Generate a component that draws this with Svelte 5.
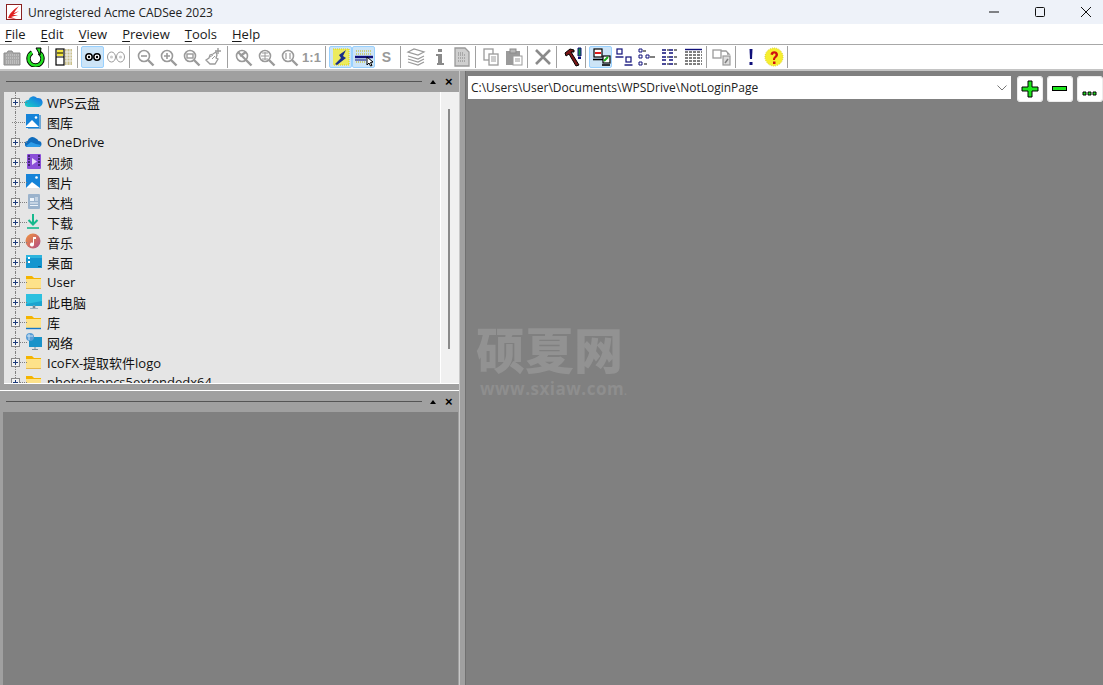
<script>
  const menus = [
    { k: 'F', r: 'ile' }, { k: 'E', r: 'dit' }, { k: 'V', r: 'iew' },
    { k: 'P', r: 'review' }, { k: 'T', r: 'ools' }, { k: 'H', r: 'elp' }
  ];

  const g = '#9a9a9a';
  const lens = (extra = '', c = g) => `<circle cx="9" cy="9" r="5.5" fill="#fff" stroke="${c}" stroke-width="1.6"/><path d="M13 13l5.5 5.5" stroke="${c}" stroke-width="2.4"/>${extra}`;
  const icons = {
    camera: `<path d="M2 6h3l1-2h4l1 2h7v12H2z" fill="#a8a8a8" stroke="#8c8c8c"/><path d="M4 8h13M4 11h13M4 14h13M4 16h13" stroke="#d4d4d4" stroke-dasharray="1 1"/>`,
    refresh: `<path d="M7 5.5a7 7 0 1 0 7 0" fill="none" stroke="#000" stroke-width="4.4"/><path d="M7 5.5a7 7 0 1 0 7 0" fill="none" stroke="#22e022" stroke-width="2.6"/><path d="M11 1l5 0-1 7z" fill="#22e022" stroke="#000"/>`,
    split: `<rect x="2" y="2" width="8" height="16" fill="#fff" stroke="#000" stroke-width="1.2"/><rect x="3" y="3" width="6" height="6" fill="#f4e640"/><path d="M3 6h6M2 10h8" stroke="#000"/><rect x="11" y="2" width="7" height="16" fill="#c9c08a"/><path d="M11 5h7M11 8h7M11 11h7M11 14h7M13 2v16M16 2v16" stroke="#eee"/>`,
    eyes: `<circle cx="6" cy="10" r="3.2" fill="#fff" stroke="#000" stroke-width="1.5"/><circle cx="14" cy="10" r="3.2" fill="#fff" stroke="#000" stroke-width="1.5"/><circle cx="6" cy="10" r="1.2"/><circle cx="14" cy="10" r="1.2"/>`,
    eyesOff: `<ellipse cx="5.5" cy="10" rx="4" ry="5" fill="#fff" stroke="${g}"/><ellipse cx="14.5" cy="10" rx="4" ry="5" fill="#fff" stroke="${g}"/><circle cx="5.5" cy="10" r="1.6" fill="#ccc"/><circle cx="14.5" cy="10" r="1.6" fill="#ccc"/>`,
    zoomOut: lens(`<path d="M6 9h6" stroke="${g}" stroke-width="1.6"/>`),
    zoomIn: lens(`<path d="M6 9h6M9 6v6" stroke="${g}" stroke-width="1.6"/>`),
    zoomFit: lens(`<rect x="6" y="7" width="6" height="4" fill="none" stroke="${g}" stroke-width="1.4"/>`),
    zoomHand: `<path d="M2 13l3-2 1-3 3-1 3-2 1 3-1 3 2 1-3 5H6z" fill="#fff" stroke="${g}" stroke-width="1.3"/><path d="M6 10l3-2M8 12l3-3" stroke="${g}"/><path d="M14 1v6M11 4h6" stroke="${g}" stroke-width="1.4"/>`,
    zoomAll: lens(`<path d="M5 5l8 8M13 5l-6 4" stroke="${g}" stroke-width="2.2"/>`),
    zoomGrid: lens(`<path d="M5 9h8M9 5v8M6 6h6M6 12h6" stroke="${g}"/>`),
    zoomReal: lens(`<path d="M7 6v6M11 6v6" stroke="${g}" stroke-width="1.2"/>`),
    lightning: `<rect x="2" y="2" width="16" height="16" fill="#f7ee2c" opacity=".75"/><path d="M2 2h16v16H2" fill="none" stroke="#e3d800" stroke-dasharray="1 1"/><path d="M4 17l6-6-2-3 7-5-3 6 3 2-9 7z" fill="#1a2f8a"/>`,
    pointer: `<path d="M2 4h16M2 7h16" stroke="#c8b400" stroke-dasharray="1 1"/><path d="M1 10h18" stroke="#10107a" stroke-width="2.4"/><path d="M1 13h11" stroke="#10107a"/><path d="M2 15h9" stroke="#c8b400" stroke-dasharray="1 1"/><path d="M13 10l6 5-2.500 .5 1.500 3-1.500 .5-1.500-3-2 2z" fill="#fff" stroke="#000"/>`,
    scan: `<path d="M7 7h7M7 14h7" stroke="none"/>`,
    layers: `<path d="M2 5l6-3 10 3-6 3z M2 9l10 3 6-3M2 12l10 3 6-3M2 15l10 3 6-3" fill="none" stroke="${g}" stroke-width="1.2"/>`,
    info: `<path d="M9 2h4v3H9zM7 7h6v9h2v2H8v-2h1V9H7z" fill="#8a8a8a"/>`,
    doc: `<path d="M3 1h10l4 4v14H3z" fill="#cfcfcf" stroke="${g}" stroke-width="1.3"/><path d="M6 8h8M6 11h8M6 14h8M6 6h5" stroke="#808080" stroke-dasharray="1 1"/>`,
    copy: `<rect x="3" y="2" width="9" height="11" fill="#fff" stroke="${g}" stroke-width="1.3"/><rect x="8" y="7" width="9" height="11" fill="#fff" stroke="${g}" stroke-width="1.3"/><path d="M10 10h5M10 12h5M10 14h5" stroke="${g}"/>`,
    paste: `<path d="M2 4h14v14H2z" fill="#9a9a9a"/><rect x="6" y="2" width="6" height="4" fill="#b8b8b8" stroke="#8a8a8a"/><rect x="9" y="9" width="9" height="9" fill="#fff" stroke="${g}"/><path d="M11 12h5M11 14h5" stroke="${g}"/>`,
    del: `<path d="M3 3l14 14M17 3L3 17" stroke="#8a8a8a" stroke-width="2.6"/>`,
    hammer: `<path d="M3 6l5-4 4 1 0 2-3 0 8 13-3 1-7-12-3 2z" fill="#7a1616" stroke="#000"/><path d="M16 1h3v8h-3z" fill="#138a3c" stroke="#10107a"/><rect x="16" y="10" width="3" height="2" fill="#10107a"/>`,
    bigIcons: `<rect x="3" y="2" width="8" height="8" fill="#fff" stroke="#000" stroke-width="1.2"/><rect x="4" y="5" width="6" height="2" fill="#e01818"/><path d="M2 12.500h10" stroke="#000" stroke-width="1.600"/><rect x="12" y="9" width="7" height="7" fill="#fff" stroke="#000" stroke-width="1.2"/><path d="M13 14l4-4" stroke="#18b018" stroke-width="2"/><path d="M11 18h8" stroke="#000" stroke-width="1.600"/>`,
    smallIcons: `<rect x="3" y="2" width="5" height="5" fill="#fff" stroke="#10107a" stroke-width="1.2"/><path d="M1.500 10h8" stroke="#10107a" stroke-width="1.400"/><rect x="12" y="10" width="5" height="5" fill="#fff" stroke="#10107a" stroke-width="1.2"/><path d="M10.500 18h8" stroke="#10107a" stroke-width="1.400"/>`,
    list: `<path d="M2 2h3v3H2zM2 8h3v3H2zM2 15h3v3H2z" fill="#fff" stroke="#10107a"/><path d="M6 4h3M13 10h5M7 17h3" stroke="#000" stroke-width="1.200"/><path d="M9 8h3v3H9z" fill="#fff" stroke="#10107a"/>`,
    details: `<path d="M2 3h4M9 3h4M2 6h4M9 6h4M2 10h4M9 10h4M2 13h4M9 13h4M2 17h4M9 17h4" stroke="#10107a" stroke-width="1.500"/><path d="M7 3h2M14 3h3M7 10h2M14 10h3M7 17h2M14 17h3" stroke="#000"/>`,
    table: `<path d="M2 2.500h17" stroke="#10107a" stroke-width="1.400"/><path d="M2 5h17M2 8h17M2 11h17M2 14h17M2 17h17" stroke="#000" stroke-dasharray="3 1" stroke-width="1.100"/>`,
    convert: `<rect x="1" y="3" width="8" height="8" fill="#fff" stroke="${g}" stroke-width="1.3"/><path d="M9 4h5l3 3-2 0" fill="none" stroke="${g}" stroke-width="1.3"/><rect x="11" y="9" width="7" height="9" fill="#ddd" stroke="${g}" stroke-width="1.2"/><path d="M13 16l3-4" stroke="#808080" stroke-width="1.600"/>`,
    bang: `<path d="M8.500 2h3l-.500 10H9z" fill="#10107a"/><rect x="8.500" y="15" width="3" height="3" fill="#10107a"/>`,
    help: `<circle cx="10" cy="10" r="9" fill="#f6ee2e"/><path d="M1 10a9 9 0 0 1 18 0a9 9 0 0 1-18 0" fill="none" stroke="#dcd21a" stroke-dasharray="1 1"/><path d="M6.500 7.500c0-4.500 7.500-4.500 7.500 0 0 3-3 3-3 5.500H9c0-3.500 2.500-3.500 2.500-5.500 0-1.500-2.500-1.500-2.500.5z" fill="#d01010"/><rect x="9" y="14.500" width="2.500" height="2.500" fill="#d01010"/>`
  };

  // | is a separator, trailing ! marks a pressed button
  const toolbar = ['camera', 'refresh', '|', 'split', '|', 'eyes!', 'eyesOff', '|',
    'zoomOut', 'zoomIn', 'zoomFit', 'zoomHand', '|', 'zoomAll', 'zoomGrid', 'zoomReal', 'one', '|',
    'lightning!', 'pointer!', 's', '|', 'layers', 'info', 'doc', '|', 'copy', 'paste', '|', 'del', '|',
    'hammer', '|', 'bigIcons!', 'smallIcons', 'list', 'details', 'table', '|', 'convert', '|', 'bang', 'help', '|'];

  const tree = [
    { label: 'WPS云盘', icon: 'cloudWps', plus: true },
    { label: '图库', icon: 'gallery', plus: false },
    { label: 'OneDrive', icon: 'cloud', plus: true },
    { label: '视频', icon: 'video', plus: true },
    { label: '图片', icon: 'picture', plus: true },
    { label: '文档', icon: 'docs', plus: true },
    { label: '下载', icon: 'download', plus: true },
    { label: '音乐', icon: 'music', plus: true },
    { label: '桌面', icon: 'desktop', plus: true },
    { label: 'User', icon: 'folder', plus: true },
    { label: '此电脑', icon: 'pc', plus: true },
    { label: '库', icon: 'library', plus: true },
    { label: '网络', icon: 'network', plus: true },
    { label: 'IcoFX-提取软件logo', icon: 'folder', plus: true },
    { label: 'photoshopcs5extendedx64', icon: 'folder', plus: true }
  ];

  const folder = `<path d="M1 3h6l2 2h7v11H1z" fill="#f4b400"/><path d="M1 6h15v10H1z" fill="#fde28a"/><path d="M1 15.500h15" stroke="#e5b850"/>`;
  const treeIcons = {
    cloudWps: `<defs><linearGradient id="w" x1="0" x2="1" y1="1" y2="0"><stop offset="0" stop-color="#19d3c5"/><stop offset="1" stop-color="#1668e8"/></linearGradient></defs><path d="M3 14a3.500 3.500 0 0 1 .5-7A5 5 0 0 1 12 5a4.500 4.500 0 0 1 2 9z" fill="url(#w)"/>`,
    gallery: `<rect x="1" y="1" width="13" height="14" fill="#1583d8"/><path d="M14 2h2v14H3v-1h11z" fill="#6fa8d6"/><path d="M1 13l6-6 7 7H1z" fill="#fff"/><circle cx="11" cy="4.500" r="1.300" fill="#fff"/>`,
    cloud: `<path d="M3 14a3 3 0 0 1-.5-6A5 5 0 0 1 11 5.500a4 4 0 0 1 2.500 2.500 3 3 0 0 1 0 6z" fill="#0f6cbd"/><path d="M1 13l5-4 5 2 5 1-2 2H3z" fill="#2b9be8"/>`,
    video: `<rect x="2" y="1" width="14" height="15" rx="1" fill="#8b4fd8"/><path d="M7 5l5 3.500L7 12z" fill="#e8dcfa"/><path d="M3 3h2M3 6h2M3 9h2M3 12h2M13 3h2M13 6h2M13 9h2M13 12h2" stroke="#2c1a52" stroke-width="1.400"/>`,
    picture: `<rect x="1" y="1" width="14" height="14" fill="#1583d8"/><path d="M1 15l6-6 8 6z" fill="#fff"/><circle cx="11.500" cy="4.500" r="1.300" fill="#fff"/>`,
    docs: `<rect x="3" y="1" width="12" height="15" rx="1" fill="#9bb3cc"/><path d="M5 5h4v3H5z" fill="#eef4fa"/><path d="M10 5h3M10 7h3M5 10h8M5 12.500h8" stroke="#eef4fa"/>`,
    download: `<path d="M8 1v10M3.500 7L8 11.500 12.500 7" fill="none" stroke="#16b98c" stroke-width="2"/><path d="M2 15h12" stroke="#16b98c" stroke-width="1.600"/>`,
    music: `<defs><linearGradient id="m" x1="0" x2="1" y1="0" y2="1"><stop offset="0" stop-color="#f0943e"/><stop offset="1" stop-color="#b24a88"/></linearGradient></defs><circle cx="8" cy="8" r="7.500" fill="url(#m)"/><path d="M8 4h3v2H9v5.500a2 2 0 1 1-1-1.700z" fill="#fff"/>`,
    desktop: `<rect x="1" y="2" width="16" height="13" fill="#1496cf"/><path d="M1 2h16v3H1z" fill="#2db4dd"/><rect x="3" y="4" width="2" height="2" fill="#fff"/><rect x="3" y="8" width="2" height="2" fill="#fff"/><path d="M13 13.500h3" stroke="#0d5e8c"/>`,
    folder,
    pc: `<rect x="1" y="1" width="16" height="12" fill="#1ba4cf"/><path d="M1 1h16v7L1 11z" fill="#2cc0df"/><path d="M8 13h2v2H8zM5 15.500h8" stroke="#9ab0bd"/>`,
    library: folder + `<path d="M1 15.500h15" stroke="#1477c9" stroke-width="1.400"/>`,
    network: `<rect x="4" y="4" width="13" height="10" fill="#1a93c9"/><circle cx="5" cy="4" r="4" fill="#5a9ed6"/><path d="M2 3h6M4 1v6" stroke="#cfe4f5"/><path d="M10 14v2M7 16.500h6" stroke="#7b8c99"/>`
  };
</script>

<div class="window">
  <header class="titlebar">
    <svg class="logo" viewBox="0 0 16 16" width="16" height="16">
      <rect x=".5" y=".5" width="15" height="15" fill="#fff" stroke="#8a2020"/>
      <path d="M2 14c2-5 5-8 11-12-3 4-4 5-5 7l5-2-6 4 5 0-7 2 5 2z" fill="#e02020"/>
    </svg>
    <span class="title">Unregistered Acme CADSee 2023</span>
    <div class="winbtns">
      <svg width="10" height="10" viewBox="0 0 10 10"><path d="M0 5h10" stroke="#111"/></svg>
      <svg width="10" height="10" viewBox="0 0 10 10"><rect x=".5" y=".5" width="9" height="9" rx="1" fill="none" stroke="#111"/></svg>
      <svg width="10" height="10" viewBox="0 0 10 10"><path d="M0 0l10 10M10 0L0 10" stroke="#111"/></svg>
    </div>
  </header>

  <nav class="menubar">
    {#each menus as m}
      <span class="menu"><u>{m.k}</u>{m.r}</span>
    {/each}
  </nav>

  <div class="toolbar">
    {#each toolbar as item}
      {#if item === '|'}
        <i class="sep"></i>
      {:else}
        {@const pressed = item.endsWith('!')}
        {@const name = item.replace('!', '')}
        <span class="tool" class:pressed>
          {#if name === 'one'}
            <b class="glyph">1:1</b>
          {:else if name === 's'}
            <b class="glyph big">S</b>
          {:else}
            <svg width="20" height="20" viewBox="0 0 20 20">{@html icons[name]}</svg>
          {/if}
        </span>
      {/if}
    {/each}
  </div>

  <main class="body">
    <section class="left">
      <div class="panel-head">
        <i class="grip"></i>
        <span class="arrow"></span>
        <span class="close">×</span>
      </div>
      <div class="tree">
        <ul>
          {#each tree as row}
            <li>
              {#if row.plus}
                <span class="expander"></span>
              {:else}
                <span class="stub"></span>
              {/if}
              <svg class="ticon" width="18" height="18" viewBox="0 0 18 18">{@html treeIcons[row.icon]}</svg>
              <span class="label">{row.label}</span>
            </li>
          {/each}
        </ul>
        <div class="scrollbar"><i class="thumb"></i></div>
      </div>
      <div class="hsplit"></div>
      <div class="panel-head">
        <i class="grip"></i>
        <span class="arrow"></span>
        <span class="close">×</span>
      </div>
      <div class="preview"></div>
    </section>

    <section class="right">
      <div class="pathbar">
        <div class="combo">
          <span>C:\Users\User\Documents\WPSDrive\NotLoginPage</span>
          <svg width="10" height="6" viewBox="0 0 10 6"><path d="M.5 .5L5 5 9.500 .5" fill="none" stroke="#777"/></svg>
        </div>
        <div class="pbtn">
          <svg width="18" height="18" viewBox="0 0 18 18"><path d="M7 1h4v6h6v4h-6v6H7v-6H1V7h6z" fill="#1ee61e" stroke="#000"/></svg>
        </div>
        <div class="pbtn">
          <svg width="16" height="6" viewBox="0 0 16 6"><rect x=".5" y=".5" width="14" height="4" fill="#1ee61e" stroke="#000"/></svg>
        </div>
        <div class="pbtn dots">
          <svg width="16" height="5" viewBox="0 0 16 5"><path d="M1 1h3v3H1zM6 1h3v3H6zM11 1h3v3h-3z" fill="#1ee61e" stroke="#000"/></svg>
        </div>
      </div>
    </section>
  </main>

  <div class="watermark">
    <div class="wm-cn">硕夏网</div>
    <div class="wm-en">www.sxiaw.com<small>.</small></div>
  </div>
</div>

<style>
  :global(body) { margin: 0; overflow: hidden; }

  .window {
    position: relative;
    height: 685px; width: 1103px;
    display: flex; flex-direction: column;
    background: #a0a0a0;
    font-family: "Open Sans", "Noto Sans", "Noto Sans CJK SC", sans-serif;
    color: #1a1a1a;
    overflow: hidden;
  }

  .titlebar {
    height: 24px; flex: none;
    display: flex; align-items: center;
    padding-left: 6px;
    background: #eef2f9;
  }
  .logo { margin-right: 6px; }
  .title { font-size: 12px; color: #222; }
  .winbtns {
    margin-left: auto;
    display: flex; align-items: center; gap: 36px;
    padding-right: 12px;
  }

  .menubar {
    height: 20px; flex: none;
    display: flex; align-items: center; gap: 15px;
    padding-left: 5px;
    background: #fff;
    font-size: 13px;
  }
  .menu u { text-underline-offset: 2px; text-decoration-thickness: 1px; }

  .toolbar {
    height: 24px; flex: none;
    display: flex; align-items: center;
    background: #fff;
    border-top: 1px solid #a8a8a8;
    border-bottom: 2px solid #c4c4c4;
  }
  .tool {
    width: 23px; height: 22px; flex: none;
    box-sizing: border-box;
    display: flex; align-items: center; justify-content: center;
    border: 1px solid transparent;
    border-radius: 2px;
  }
  .tool.pressed { background: #cce4f7; border-color: #99d1ff; }
  .sep {
    width: 6px; height: 22px; flex: none;
    box-sizing: border-box;
    border-left: 1px solid #a0a0a0;
    margin-left: 2px;
    width: 4px;
    margin-right: 0;
  }
  .glyph { font-size: 13px; color: #999; font-family: "Liberation Sans", sans-serif; }
  .glyph.big { font-size: 14px; }

  .body { flex: 1; display: flex; min-height: 0; }
  .left {
    width: 459px; flex: none;
    display: flex; flex-direction: column;
    border-right: 1px solid #c8c8c8;
    box-sizing: content-box;
  }
  .panel-head {
    height: 21px; flex: none;
    display: flex; align-items: center;
    padding: 0 4px 0 6px;
    background: #a0a0a0;
  }
  .grip { flex: 1; height: 1px; background: #555; margin-right: 8px; }
  .arrow {
    width: 0; height: 0;
    border: 3px solid transparent; border-top: 0;
    border-bottom: 4px solid #000;
    margin: 0 9px 0 0;
  }
  .close { font: 700 13px/1 "Liberation Sans", sans-serif; color: #000; width: 9px; margin-right: 1px; }

  .tree {
    height: 291px; flex: none;
    margin-left: 4px;
    display: flex;
    background: #e5e5e5;
    border-bottom: 1px solid #fff;
    overflow: hidden;
  }
  ul { list-style: none; margin: 0; padding: 0; flex: 1; }
  li {
    height: 20px;
    display: flex; align-items: center;
    font-size: 13px;
    color: #111;
    white-space: nowrap;
    position: relative;
  }
  li::before {
    content: ""; position: absolute; left: 11px; top: 0; bottom: 0;
    border-left: 1px dotted #808080;
  }
  .expander {
    width: 9px; height: 9px; flex: none;
    box-sizing: border-box;
    margin-left: 7px;
    position: relative; z-index: 1;
    border: 1px solid #8a8a8a;
    background:
      linear-gradient(#1c3a7a, #1c3a7a) center / 5px 1px no-repeat,
      linear-gradient(#1c3a7a, #1c3a7a) center / 1px 5px no-repeat,
      #f2f2f2;
  }
  .stub { width: 9px; margin-left: 7px; flex: none; }
  .expander::after, .stub::after {
    content: ""; position: absolute; top: 3px; left: 8px; width: 7px;
    border-top: 1px dotted #808080;
  }
  .stub { position: relative; height: 9px; }
  .stub::after { left: 1px; width: 13px; top: 4px; }
  .ticon { margin-left: 5px; flex: none; }
  .label { margin-left: 4px; }

  .scrollbar {
    width: 18px; flex: none;
    position: relative;
    background: #f0f0f0;
    border-left: 1px solid #fff;
  }
  .thumb {
    position: absolute; left: 7px; top: 17px;
    width: 2px; height: 240px;
    background: #8a8a8a;
  }

  .hsplit {
    height: 6px; flex: none;
    background: #a0a0a0;
    border-bottom: 1px solid #fff;
    box-sizing: border-box;
    height: 7px;
  }
  .preview {
    flex: 1;
    margin: 0 1px 0 3px;
    background: #808080;
  }

  .right {
    flex: 1; min-width: 0;
    margin-left: 5px;
    background: #808080;
    border-left: 1px solid #707070;
  }
  .pathbar {
    display: flex; align-items: flex-start;
    padding: 5px 0 0 2px;
  }
  .combo {
    width: 543px; height: 23px; flex: none;
    box-sizing: border-box;
    display: flex; align-items: center; justify-content: space-between;
    padding: 0 4px 0 3px;
    background: #fff;
    font-size: 12px; color: #222;
  }
  .pbtn {
    width: 26px; height: 26px; flex: none;
    box-sizing: border-box;
    margin-left: 4px;
    display: flex; align-items: center; justify-content: center;
    background: #fff;
    border: 1px solid #d0d0d0;
    border-radius: 3px;
    outline: 1px solid #ececec;
    outline-offset: -1px;
  }
  .pbtn:nth-child(2) { margin-left: 6px; }
  .pbtn.dots { align-items: flex-end; padding-bottom: 5px; }

  /* stamped over the whole shot */
  .watermark {
    position: absolute; left: 476px; top: 318px;
    width: 150px;
    color: #929292;
    pointer-events: none;
  }
  .wm-cn {
    font: 900 49px/60px "Noto Sans CJK SC", sans-serif;
    white-space: nowrap;
  }
  .wm-en {
    font: 700 17px/22px "Open Sans", sans-serif;
    white-space: nowrap;
    padding-left: 4px;
    letter-spacing: .5px;
    color: #8e8e8e;
  }
  .wm-en small { font-size: 10px; }
</style>
